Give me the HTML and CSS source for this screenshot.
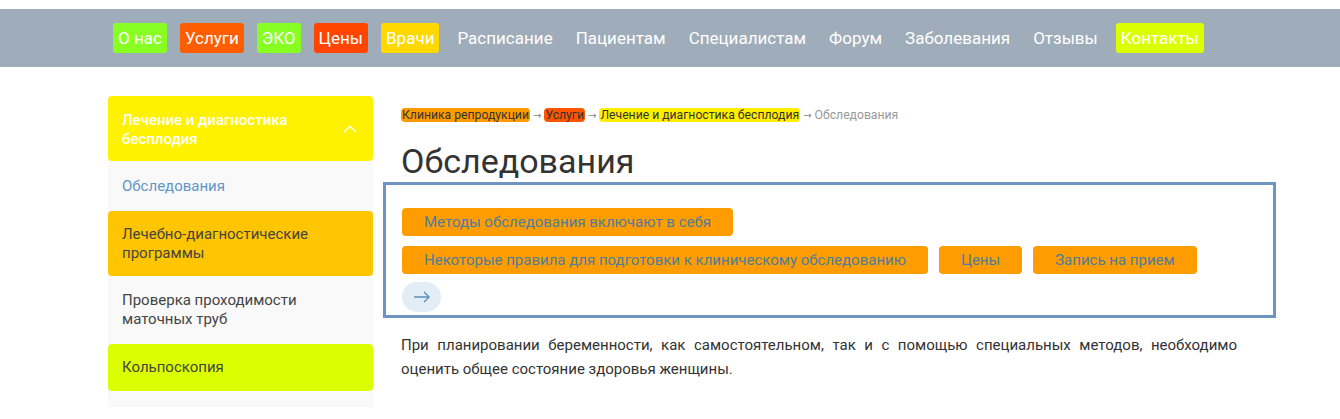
FILE: index.html
```html
<!DOCTYPE html>
<html lang="ru">
  <head>
    <meta charset="UTF-8">
    <meta name="viewport" content="width=device-width, initial-scale=1.0">
    <title>Обследования</title>
    <link rel="stylesheet" href="styles.css">
  </head>
  <body>
    <header class="top">
      <nav class="menu">
        <a href="#" class="menu-item green">О нас</a>
        <a href="#" class="menu-item orange">Услуги</a>
        <a href="#" class="menu-item green">ЭКО</a>
        <a href="#" class="menu-item red">Цены</a>
        <a href="#" class="menu-item gold">Врачи</a>
        <a href="#" class="menu-item">Расписание</a>
        <a href="#" class="menu-item">Пациентам</a>
        <a href="#" class="menu-item">Специалистам</a>
        <a href="#" class="menu-item">Форум</a>
        <a href="#" class="menu-item">Заболевания</a>
        <a href="#" class="menu-item">Отзывы</a>
        <a href="#" class="menu-item lime">Контакты</a>
      </nav>
    </header>

    <div class="page">
      <aside class="side">
        <div class="side-item side-yellow side-open">
          <span>Лечение и диагностика бесплодия</span>
          <svg class="chevron" width="14" height="8" viewBox="0 0 14 8">
            <path d="M1 7 L7 1.5 L13 7" fill="none" stroke="#fff" stroke-width="1.4"/>
          </svg>
        </div>
        <a href="#" class="side-item side-current">Обследования</a>
        <a href="#" class="side-item side-amber">Лечебно-диагностические программы</a>
        <a href="#" class="side-item side-plain">Проверка проходимости маточных труб</a>
        <a href="#" class="side-item side-lime">Кольпоскопия</a>
      </aside>

      <main class="content">
        <div class="crumbs">
          <a href="#" class="crumb c-orange">Клиника репродукции</a>
          <span class="sep">→</span>
          <a href="#" class="crumb c-red">Услуги</a>
          <span class="sep">→</span>
          <a href="#" class="crumb c-yellow">Лечение и диагностика бесплодия</a>
          <span class="sep">→</span>
          <span class="crumb-last">Обследования</span>
        </div>

        <h1 class="title">Обследования</h1>

        <div class="anchors">
          <div class="anchor-row">
            <a href="#" class="anchor">Методы обследования включают в себя</a>
          </div>
          <div class="anchor-row">
            <a href="#" class="anchor">Некоторые правила для подготовки к клиническому обследованию</a>
            <a href="#" class="anchor">Цены</a>
            <a href="#" class="anchor">Запись на прием</a>
          </div>
          <div class="anchor-row">
            <button type="button" class="next">
              <svg width="18" height="12" viewBox="0 0 18 12">
                <path d="M1 6 H16 M11 1 L16 6 L11 11" fill="none" stroke="#5d8fbb" stroke-width="1.4"/>
              </svg>
            </button>
          </div>
        </div>

        <p class="text">При планировании беременности, как самостоятельном, так и с помощью специальных методов, необходимо оценить общее состояние здоровья женщины.</p>
      </main>
    </div>
  </body>
</html>
```

FILE: styles.css
```css
body {
  margin: 0;
  padding-top: 9px;
  font-family: Roboto, "Noto Sans", sans-serif;
  color: #333;
  background: #fff;
}

a {
  text-decoration: none;
}

.top {
  height: 58px;
  background-color: #9facb9;
  display: flex;
  align-items: center;
}

.menu {
  display: flex;
  gap: 13px;
  margin-left: 113px;
}

.menu-item {
  padding: 0 5px;
  height: 30px;
  line-height: 30px;
  font-size: 17px;
  color: #fff;
  border-radius: 3px;
}

.green { background-color: #88ff22; }
.orange { background-color: #ff5e00; }
.red { background-color: #ff4500; }
.gold { background-color: #ffd800; }
.lime { background-color: #dcff00; }

.page {
  display: flex;
  gap: 28px;
  width: 1129px;
  margin: 29px 0 0 108px;
}

.side {
  width: 265px;
  flex-shrink: 0;
  background-color: #f9f9f9;
  padding-bottom: 16px;
  align-self: flex-start;
}

.side-item {
  display: flex;
  align-items: center;
  padding: 0 14px;
  font-size: 15px;
  line-height: 19px;
  color: #444;
  border-radius: 4px;
}

.side-open {
  height: 65px;
  justify-content: space-between;
  color: #fff;
  font-weight: 500;
}

.side-open span {
  width: 200px;
  padding-top: 2px;
}

.chevron {
  margin-right: 2px;
}

.side-yellow { background-color: #fff200; }
.side-amber { background-color: #ffc600; height: 65px; }
.side-lime { background-color: #dcff00; height: 47px; }

.side-current {
  height: 50px;
  color: #6195c6;
}

.side-plain {
  height: 68px;
}

.side-amber, .side-plain {
  padding-right: 60px;
}

.content {
  flex: 1;
  padding-top: 12px;
}

.crumbs {
  font-size: 12.2px;
  line-height: 14px;
  color: #999;
}

.crumb {
  color: #333;
  padding: 0 1px;
  border-radius: 4px;
}

.c-orange { background-color: #ff9a00; }
.c-red { background-color: #ff5500; }
.c-yellow { background-color: #ffee00; }

.sep {
  color: #888;
  font-family: "DejaVu Sans", sans-serif;
  font-size: 10px;
}

.title {
  margin: 18px 0 0 0;
  font-size: 34px;
  line-height: 40px;
  font-weight: 400;
  color: #333;
}

.anchors {
  margin: 1px -39px 0 -18px;
  border: 3px solid #7094c1;
  padding: 23px 16px 3px 16px;
  display: flex;
  flex-direction: column;
  gap: 10px;
}

.anchor-row {
  display: flex;
  gap: 11px;
}

.anchor {
  height: 28px;
  line-height: 28px;
  padding: 0 22px;
  font-size: 15px;
  color: #4d7d9f;
  background-color: #ff9d00;
  border-radius: 4px;
}

.next {
  margin-top: -2px;
  width: 39px;
  height: 30px;
  border: none;
  border-radius: 15px;
  background-color: #e3edf5;
  display: flex;
  align-items: center;
  justify-content: center;
  padding: 0;
}

.text {
  margin: 15px 0 0 0;
  font-size: 15px;
  line-height: 24px;
  text-align: justify;
  color: #333;
}
```
